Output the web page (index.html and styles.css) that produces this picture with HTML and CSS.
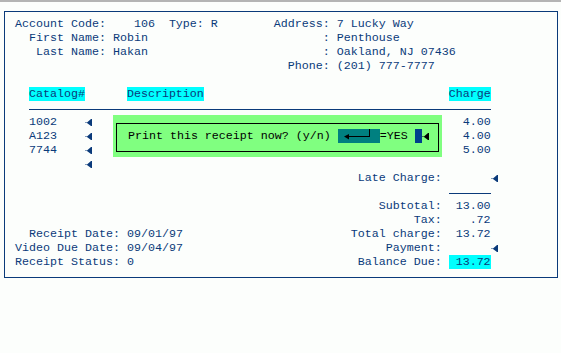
FILE: index.html
```html
<!DOCTYPE html>
<html lang="en">
<head>
  <meta charset="UTF-8">
  <title>Video Receipt</title>
  <link rel="stylesheet" href="styles.css">
</head>
<body>
  <div class="tela">

    <div class="cabecalho">
      <div>
        <div class="linha"><span class="rotulo r13">Account Code:</span>    106  Type: R</div>
        <div class="linha"><span class="rotulo r13">First Name:</span> Robin</div>
        <div class="linha"><span class="rotulo r13">Last Name:</span> Hakan</div>
      </div>
      <div>
        <div class="linha"><span class="rotulo r8">Address:</span> 7 Lucky Way</div>
        <div class="linha"><span class="rotulo r8">:</span> Penthouse</div>
        <div class="linha"><span class="rotulo r8">:</span> Oakland, NJ 07436</div>
        <div class="linha"><span class="rotulo r8">Phone:</span> (201) 777-7777</div>
      </div>
    </div>

    <div class="tabela">
      <span><span class="destaque">Catalog#</span></span>
      <span></span>
      <span><span class="destaque">Description</span></span>
      <span><span class="destaque">Charge</span></span>
      <span></span>
    </div>
    <div class="regua"></div>

    <div class="itens">
      <div class="tabela">
        <span>1002</span>
        <span><svg class="seta" viewBox="0 0 7 14"><path d="M0 7.5h2l4-3.5h1v7H6L2 8H0z" fill="currentColor"/></svg></span>
        <span></span>
        <span class="valor">4.00</span>
        <span></span>
      </div>
      <div class="tabela">
        <span>A123</span>
        <span><svg class="seta" viewBox="0 0 7 14"><path d="M0 7.5h2l4-3.5h1v7H6L2 8H0z" fill="currentColor"/></svg></span>
        <span></span>
        <span class="valor">4.00</span>
        <span></span>
      </div>
      <div class="tabela">
        <span>7744</span>
        <span><svg class="seta" viewBox="0 0 7 14"><path d="M0 7.5h2l4-3.5h1v7H6L2 8H0z" fill="currentColor"/></svg></span>
        <span></span>
        <span class="valor">5.00</span>
        <span></span>
      </div>
      <div class="tabela">
        <span></span>
        <span><svg class="seta" viewBox="0 0 7 14"><path d="M0 7.5h2l4-3.5h1v7H6L2 8H0z" fill="currentColor"/></svg></span>
        <span></span>
        <span></span>
        <span></span>
      </div>

      <!-- caixa de confirmacao por cima das linhas -->
      <div class="dialogo">
        <div class="dialogo-borda">
          <span class="linha">Print this receipt now? (y/n) </span><span class="tecla"><svg viewBox="0 0 42 14" width="42" height="14"><path d="M6 7.5L11 5v2h20V0h1v8H11v2.5z" fill="#000"/></svg></span><span class="linha">=YES </span><span class="cursor"></span><svg class="seta" viewBox="0 0 7 14"><path d="M0 7.5h2l4-3.5h1v7H6L2 8H0z" fill="#000"/></svg>
        </div>
      </div>
    </div>

    <div class="rodape">
      <div class="datas">
        <div class="linha"><span class="rotulo r15">Receipt Date:</span> 09/01/97</div>
        <div class="linha"><span class="rotulo r15">Video Due Date:</span> 09/04/97</div>
        <div class="linha"><span class="rotulo r15">Receipt Status:</span> 0</div>
      </div>
      <div class="totais">
        <div class="total">
          <span class="rotulo">Late Charge:</span><span></span><span></span>
          <span><svg class="seta" viewBox="0 0 7 14"><path d="M0 7.5h2l4-3.5h1v7H6L2 8H0z" fill="currentColor"/></svg></span>
        </div>
        <div class="total">
          <span></span><span></span><span class="regua-curta"></span><span></span>
        </div>
        <div class="total">
          <span class="rotulo">Subtotal:</span><span></span><span class="valor">13.00</span><span></span>
        </div>
        <div class="total">
          <span class="rotulo">Tax:</span><span></span><span class="valor">.72</span><span></span>
        </div>
        <div class="total">
          <span class="rotulo">Total charge:</span><span></span><span class="valor">13.72</span><span></span>
        </div>
        <div class="total">
          <span class="rotulo">Payment:</span><span></span><span></span>
          <span><svg class="seta" viewBox="0 0 7 14"><path d="M0 7.5h2l4-3.5h1v7H6L2 8H0z" fill="currentColor"/></svg></span>
        </div>
        <div class="total">
          <span class="rotulo">Balance Due:</span><span></span><span class="valor destaque">13.72</span><span></span>
        </div>
      </div>
    </div>

  </div>
</body>
</html>
```

FILE: styles.css
```css
body {
  margin: 0;
  border-top: 2px solid #b4b4b4;
  background-color: #fcfefc;
}
.tela {
  width: 554px;
  height: 267px;
  box-sizing: border-box;
  margin: 9px 0 0 4px;
  padding: 5px 0 8px 10px;
  border: 1px solid #0a3a7a;
  font-family: "Liberation Mono", "Courier New", monospace;
  font-size: 11.66px;
  line-height: 14px;
  color: #0a3a7a;
}
.linha {
  height: 14px;
  white-space: pre;
}
.rotulo {
  display: inline-block;
  text-align: right;
  white-space: pre;
}
.r8 {
  width: 8ch;
}
.r13 {
  width: 13ch;
}
.r15 {
  width: 15ch;
}
.cabecalho {
  display: grid;
  grid-template-columns: 37ch auto;
  margin-bottom: 14px;
}
.tabela {
  display: grid;
  grid-template-columns: 8ch 6ch 46ch 6ch 1ch;
  height: 14px;
  padding-left: 2ch;
}
.destaque {
  display: inline-block;
  height: 14px;
  background-color: #00ffff;
}
.valor {
  text-align: right;
}
.regua {
  width: 66ch;
  height: 8px;
  margin: 0 0 5px 2ch;
  border-bottom: 1px solid #0a3a7a;
}
.seta {
  display: block;
  width: 7px;
  height: 14px;
}
.itens {
  position: relative;
}
.dialogo {
  position: absolute;
  top: 0;
  left: 14ch;
  width: 329px;
  height: 42px;
  box-sizing: border-box;
  padding: 8px 3px 5px;
  background-color: #80ff80;
  color: #000;
}
.dialogo-borda {
  display: flex;
  height: 29px;
  box-sizing: border-box;
  padding: 5px 0 8px 11px;
  border: 1px solid #000;
}
.tecla {
  width: 6ch;
  height: 14px;
  background-color: #008080;
}
.tecla svg {
  display: block;
}
.cursor {
  width: 1ch;
  height: 14px;
  background-color: #00408c;
}
.rodape {
  display: grid;
  grid-template-columns: 48ch auto;
}
.datas {
  align-self: end;
}
.total {
  display: grid;
  grid-template-columns: 13ch 1ch 6ch 1ch;
  height: 14px;
}
.total .rotulo {
  display: block;
}
.total .destaque {
  display: block;
}
.regua-curta {
  height: 8px;
  border-bottom: 1px solid #0a3a7a;
}
```
